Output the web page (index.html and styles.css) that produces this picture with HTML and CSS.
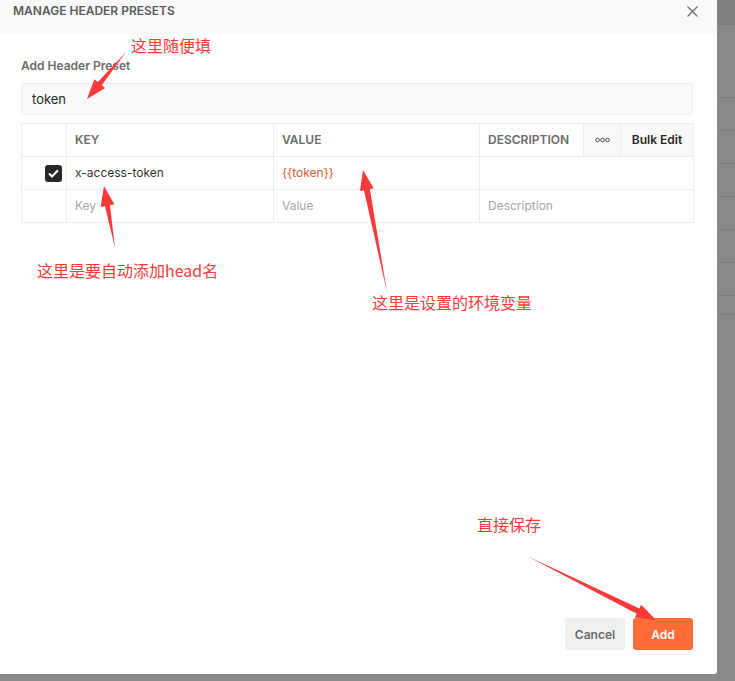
FILE: index.html
```html
<!DOCTYPE html>
<html lang="zh">
<head>
<meta charset="utf-8">
<title>Manage Header Presets</title>
<link rel="stylesheet" href="styles.css">
</head>
<body>
<div class="page">
  <div class="modal">
    <div class="modal-header">
      <span class="modal-title">MANAGE HEADER PRESETS</span>
      <svg class="close" width="11" height="11" viewBox="0 0 11 11"><path d="M0.5 0.5L10.5 10.5M10.5 0.5L0.5 10.5" stroke="#6b6b6b" stroke-width="1.2"/></svg>
    </div>
    <div class="modal-body">
      <div class="label">Add Header Preset</div>
      <div class="input">token</div>
      <div class="table">
        <div class="cell head"></div>
        <div class="cell head">KEY</div>
        <div class="cell head">VALUE</div>
        <div class="cell head">DESCRIPTION</div>
        <div class="cell head tool"><svg width="15" height="6" viewBox="0 0 15 6"><circle cx="2.5" cy="3" r="1.8" fill="none" stroke="#505050" stroke-width="1"/><circle cx="7.5" cy="3" r="1.8" fill="none" stroke="#505050" stroke-width="1"/><circle cx="12.5" cy="3" r="1.8" fill="none" stroke="#505050" stroke-width="1"/></svg></div>
        <div class="cell head tool bulk">Bulk Edit</div>
        <div class="cell check"><span class="checkbox"><svg width="11" height="9" viewBox="0 0 11 9"><path d="M1 4.5L4 7.5L10 1.2" fill="none" stroke="#fff" stroke-width="2"/></svg></span></div>
        <div class="cell">x-access-token</div>
        <div class="cell var">{{token}}</div>
        <div class="cell span3"></div>
        <div class="cell"></div>
        <div class="cell ph">Key</div>
        <div class="cell ph">Value</div>
        <div class="cell ph span3">Description</div>
      </div>
    </div>
    <div class="modal-footer">
      <button class="btn cancel">Cancel</button>
      <button class="btn add">Add</button>
    </div>
  </div>
  <div class="sidebar">
    <div class="seg seg-top"></div>
    <div class="seg seg-a"></div>
    <div class="seg seg-row"></div>
    <div class="seg seg-row"></div>
    <div class="seg seg-row"></div>
    <div class="seg seg-row"></div>
    <div class="seg seg-row"></div>
    <div class="seg seg-row"></div>
    <div class="seg seg-b"></div>
  </div>

  <svg class="arrows" width="735" height="681" viewBox="0 0 735 681">
    <polygon points="126,52 97.85,82.01 94.38,79.14 87,99 105.16,88.08 101.69,85.21"/>
    <polygon points="115,248 109.95,205.25 114.38,204.47 104,186 100.60,206.91 105.03,206.13"/>
    <polygon points="387,292 369.8,189.04 373.73,188.27 363,170 359.99,190.97 363.92,190.2"/>
    <polygon points="527,556 639.41,608.42 641.19,604.84 656,620 634.97,617.38 636.75,613.8"/>
  </svg>
  <div class="note note-1">这里随便填</div>
  <div class="note note-2">这里是要自动添加head名</div>
  <div class="note note-3">这里是设置的环境变量</div>
  <div class="note note-4">直接保存</div>
</div>
</body>
</html>
```

FILE: styles.css
```css
* { box-sizing: border-box; }
html, body { margin: 0; padding: 0; }
body {
  background: #888888;
  font-family: Inter, "Noto Sans", "Liberation Sans", sans-serif;
  width: 735px;
  height: 681px;
  overflow: hidden;
}
.page {
  position: relative;
  display: flex;
  width: 735px;
  height: 681px;
}
.modal {
  width: 717px;
  height: 674px;
  background: #ffffff;
  border-bottom-right-radius: 3px;
  display: flex;
  flex-direction: column;
}
.modal-header {
  height: 34px;
  background: #f9f9f9;
  display: flex;
  justify-content: space-between;
  align-items: flex-start;
  padding: 3px 19px 0 13px;
}
.modal-title {
  font-size: 12px;
  line-height: 16px;
  font-weight: 600;
  color: #5a5a5a;
}
.close { margin-top: 3px; }
.modal-body {
  padding: 24px 24px 0 21px;
}
.label {
  font-size: 12px;
  line-height: 16px;
  font-weight: 600;
  color: #6b6b6b;
  margin-bottom: 9px;
}
.input {
  width: 672px;
  height: 32px;
  background: #f9f9f9;
  border: 1px solid #ededed;
  border-radius: 3px;
  padding: 0 10px;
  font-size: 13px;
  line-height: 30px;
  color: #282828;
  margin-bottom: 8px;
}
.table {
  display: grid;
  grid-template-columns: 45px 207px 206px 104px 37px 73px;
  grid-auto-rows: 33px;
  width: 673px;
  border-top: 1px solid #ededed;
  border-left: 1px solid #ededed;
}
.cell {
  border-right: 1px solid #ededed;
  border-bottom: 1px solid #ededed;
  padding: 0 8px 2px 8px;
  display: flex;
  align-items: center;
  font-size: 12px;
  color: #333333;
  white-space: nowrap;
}
.cell.head {
  font-weight: 600;
  color: #6b6b6b;
}
.cell.tool {
  background: #f9f9f9;
  justify-content: center;
  padding: 0;
}
.cell.bulk { color: #282828; padding-bottom: 1px; }
.cell.span3 { grid-column: span 3; }
.cell.var { color: #e05a2b; }
.cell.ph { color: #a6a6a6; }
.cell.check {
  justify-content: flex-end;
  padding: 0 4px 0 0;
}
.checkbox {
  width: 17px;
  height: 17px;
  background: #282828;
  border-radius: 3px;
  display: flex;
  align-items: center;
  justify-content: center;
}
.modal-footer {
  margin-top: auto;
  display: flex;
  justify-content: flex-end;
  gap: 8px;
  padding: 0 24px 24px 0;
}
.btn {
  width: 60px;
  height: 32px;
  border: 0;
  border-radius: 3px;
  font-family: Inter, "Liberation Sans", sans-serif;
  font-size: 12px;
  font-weight: 600;
  padding: 0;
}
.btn.cancel { background: #f0f0f0; color: #6b6b6b; }
.btn.add { background: #ff6c37; color: #ffffff; }

.sidebar {
  flex: 1;
  height: 681px;
  display: flex;
  flex-direction: column;
  background: #888888;
}
.seg { border-bottom: 1px solid #7c7c7c; }
.seg-top { height: 25px; background: #808080; }
.seg-a { height: 73px; }
.seg-row { height: 33px; }
.seg-b { height: 19px; }

.arrows {
  position: absolute;
  left: 0;
  top: 0;
  pointer-events: none;
}
.arrows polygon { fill: #f83a3a; }
.note {
  position: absolute;
  font-family: "Noto Sans CJK SC", "Noto Sans", sans-serif;
  font-size: 16px;
  line-height: 16px;
  color: #f83a3a;
  white-space: nowrap;
}
.note-1 { left: 131px; top: 37px; }
.note-2 { left: 37px; top: 262px; }
.note-3 { left: 372px; top: 294px; }
.note-4 { left: 477px; top: 516px; }
```
